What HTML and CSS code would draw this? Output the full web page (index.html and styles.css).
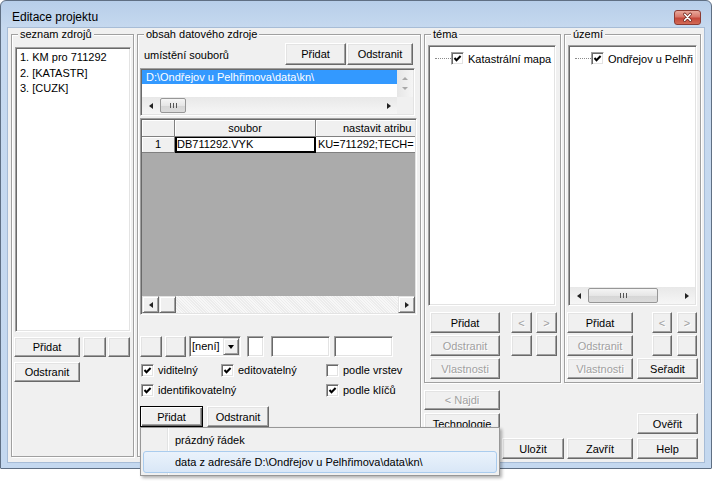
FILE: index.html
```html
<!DOCTYPE html>
<html lang="cs">
<head>
<meta charset="utf-8">
<title>Editace projektu</title>
<link rel="stylesheet" href="styles.css">
</head>
<body>
<div class="window">
  <div class="titlebar">
    <span class="title">Editace projektu</span>
    <span class="close"><svg width="27" height="15" viewBox="0 0 27 15"><path d="M10.5 4 L16.5 10.5 M16.5 4 L10.5 10.5" stroke="#6e2a22" stroke-width="3.4" stroke-linecap="round"/><path d="M10.5 4 L16.5 10.5 M16.5 4 L10.5 10.5" stroke="#fff" stroke-width="1.8" stroke-linecap="round"/></svg></span>
  </div>
  <div class="client">
    <fieldset class="group g-src">
      <legend>seznam zdrojů</legend>
      <div class="listbox src-list">
        <div class="li">1. KM pro 711292</div>
        <div class="li">2. [KATASTR]</div>
        <div class="li">3. [CUZK]</div>
      </div>
      <div class="row src-row1">
        <button class="btn w66">Přidat</button>
        <button class="btn w23 ml3"></button>
        <button class="btn w22 ml2"></button>
      </div>
      <div class="row src-row2">
        <button class="btn w66">Odstranit</button>
      </div>
    </fieldset>

    <fieldset class="group g-content">
      <legend>obsah datového zdroje</legend>
      <div class="row cont-top">
        <span class="lbl">umístění souborů</span>
        <button class="btn h22 w61 push">Přidat</button>
        <button class="btn h22 w66 ml1">Odstranit</button>
      </div>
      <div class="listbox path-list">
        <div class="pl-item"><div class="sel">D:\Ondřejov u Pelhřimova\data\kn\</div></div>
        <div class="vscroll"><span class="tri tri-up"></span><span class="tri tri-dn"></span></div>
        <div class="hscroll">
          <span class="sarrow"><span class="tri tri-l"></span></span>
          <span class="thumb w26"><span class="grip"></span></span>
          <span class="strack"></span>
          <span class="sarrow"><span class="tri tri-r"></span></span>
        </div>
        <div class="corner"></div>
      </div>
      <div class="listbox grid">
        <div class="grid-body">
          <div class="grow ghead">
            <div class="gc fixed c0"></div>
            <div class="gc fixed c1 center">soubor</div>
            <div class="gc fixed c2 hdr2">nastavit atribu</div>
          </div>
          <div class="grow">
            <div class="gc fixed c0 center">1</div>
            <div class="gc cell c1 focus">DB711292.VYK</div>
            <div class="gc cell c2 tight">KU=711292;TECH=</div>
          </div>
        </div>
        <div class="gscroll">
          <span class="cbtn"><span class="tri tri-l"></span></span>
          <span class="cbtn cthumb"></span>
          <span class="ctrack"></span>
          <span class="cbtn"><span class="tri tri-r"></span></span>
        </div>
      </div>
      <div class="row ctrl-row">
        <button class="btn w22"></button>
        <button class="btn w21 ml3"></button>
        <div class="combo ml3"><span class="combo-text">[není]</span><span class="combo-btn"><span class="tri tri-dn dark"></span></span></div>
        <div class="edit w17 ml6"></div>
        <div class="edit w59 ml7"></div>
        <div class="edit w59 ml4"></div>
      </div>
      <div class="checks">
        <label class="chk"><span class="box"><svg width="9" height="9" viewBox="0 0 9 9"><path d="M1.5 4 L3.5 6.2 L7.6 2" stroke="#000" stroke-width="2" fill="none"/></svg></span>viditelný</label>
        <label class="chk"><span class="box"><svg width="9" height="9" viewBox="0 0 9 9"><path d="M1.5 4 L3.5 6.2 L7.6 2" stroke="#000" stroke-width="2" fill="none"/></svg></span>editovatelný</label>
        <label class="chk"><span class="box"></span>podle vrstev</label>
        <label class="chk span2"><span class="box"><svg width="9" height="9" viewBox="0 0 9 9"><path d="M1.5 4 L3.5 6.2 L7.6 2" stroke="#000" stroke-width="2" fill="none"/></svg></span>identifikovatelný</label>
        <label class="chk"><span class="box"><svg width="9" height="9" viewBox="0 0 9 9"><path d="M1.5 4 L3.5 6.2 L7.6 2" stroke="#000" stroke-width="2" fill="none"/></svg></span>podle klíčů</label>
      </div>
      <div class="row cont-btns">
        <button class="btn default w63">Přidat</button>
        <button class="btn w62 ml4">Odstranit</button>
      </div>
    </fieldset>

    <div class="rightcol">
      <div class="trees">
        <fieldset class="group g-tree">
          <legend>téma</legend>
          <div class="listbox tree t1">
            <div class="titem"><span class="dots"></span><span class="box"><svg width="9" height="9" viewBox="0 0 9 9"><path d="M1.5 4 L3.5 6.2 L7.6 2" stroke="#000" stroke-width="2" fill="none"/></svg></span><span class="tlabel">Katastrální mapa</span></div>
          </div>
          <div class="trows t1rows">
            <div class="row"><button class="btn w70">Přidat</button><button class="btn w21 ml11 dis">&lt;</button><button class="btn w21 ml4 dis">&gt;</button></div>
            <div class="row"><button class="btn w70 dis">Odstranit</button><button class="btn w21 ml11"></button><button class="btn w21 ml4"></button></div>
            <div class="row"><button class="btn w70 dis">Vlastnosti</button></div>
          </div>
        </fieldset>
        <fieldset class="group g-tree">
          <legend>území</legend>
          <div class="listbox tree t2">
            <div class="titem"><span class="dots"></span><span class="box"><svg width="9" height="9" viewBox="0 0 9 9"><path d="M1.5 4 L3.5 6.2 L7.6 2" stroke="#000" stroke-width="2" fill="none"/></svg></span><span class="tlabel">Ondřejov u Pelhři</span></div>
            <div class="hscroll tscroll">
              <span class="sarrow"><span class="tri tri-l"></span></span>
              <span class="thumb w70"><span class="grip"></span></span>
              <span class="strack"></span>
              <span class="sarrow"><span class="tri tri-r"></span></span>
            </div>
          </div>
          <div class="trows t2rows">
            <div class="row"><button class="btn w66">Přidat</button><button class="btn w20 ml19 dis">&lt;</button><button class="btn w20 ml5 dis">&gt;</button></div>
            <div class="row"><button class="btn w66 dis">Odstranit</button><button class="btn w20 ml19"></button><button class="btn w20 ml5"></button></div>
            <div class="row"><button class="btn w66 dis">Vlastnosti</button><button class="btn w61 ml4">Seřadit</button></div>
          </div>
        </fieldset>
      </div>
      <div class="row najdi-row"><button class="btn w76 h20 dis">&lt; Najdi</button></div>
      <div class="row tech-row"><button class="btn w76">Technologie</button><button class="btn w61 push mr3">Ověřit</button></div>
      <div class="row end-row"><button class="btn w62">Uložit</button><button class="btn w66 ml3">Zavřít</button><button class="btn w61 ml4">Help</button></div>
    </div>

    <div class="menu">
      <div class="mi">prázdný řádek</div>
      <div class="mi hl">data z adresáře D:\Ondřejov u Pelhřimova\data\kn\</div>
    </div>
  </div>
</div>
</body>
</html>
```

FILE: styles.css
```css
* { box-sizing: border-box; }
html, body { margin: 0; padding: 0; }
body {
  background: #fff;
  font-family: "Liberation Sans", Arial, sans-serif;
  font-size: 11px;
  color: #000;
  width: 712px;
  height: 486px;
  overflow: hidden;
}
.window {
  position: relative;
  width: 712px;
  height: 469px;
  border: 1px solid #5f6f83;
  border-radius: 6px 6px 1px 1px;
  background: linear-gradient(to bottom, #b7cee9 0, #c6d9ef 27px, #c4d8ef 100%);
  padding: 0 7px;
}
.titlebar {
  height: 27px;
  display: flex;
  align-items: flex-start;
  justify-content: space-between;
}
.title { font-size: 12px; line-height: 14px; margin: 9px 0 0 4px; }
.close {
  width: 27px; height: 15px;
  margin: 9px 3px 0 0;
  border: 1px solid #8c3b33;
  border-radius: 3px;
  background: linear-gradient(to bottom, #e9a99c 0, #d8776a 45%, #c4473a 55%, #d26a55 100%);
  display: flex;
  align-items: center;
  justify-content: center;
  overflow: hidden;
}
.close svg { display: block; margin-top: -1px; }
.client {
  position: relative;
  height: 434px;
  background: #f0f0f0;
  display: flex;
  align-items: flex-start;
  padding-left: 3px;
  box-shadow: 0 0 0 1px #a7bcd6;
}

/* group boxes */
.group {
  margin: 0;
  padding: 0;
  min-width: 0;
  border: 1px solid #a0a0a0;
  box-shadow: inset 1px 1px 0 #fff, 1px 1px 0 #fff;
}
.group legend {
  padding: 0 2px;
  margin-left: 6px;
  line-height: 12px;
  background: #f0f0f0;
}
.g-src { width: 123px; height: 429px; margin-right: 3px; padding-top: 7px; }
.g-content { width: 284px; height: 429px; margin-right: 3px; }
.g-tree { width: 137px; height: 355px; padding-top: 5px; }

.row { display: flex; align-items: center; }

/* buttons */
.btn {
  height: 21px;
  margin: 0;
  padding: 0;
  font: inherit;
  font-weight: normal;
  color: #000;
  background: #f0f0f0;
  border: 1px solid;
  border-color: #fff #696969 #696969 #fff;
  box-shadow: inset -1px -1px 0 #a0a0a0, inset 1px 1px 0 #e3e3e3;
  display: flex;
  align-items: center;
  justify-content: center;
  flex: none;
  white-space: nowrap;
}
.btn.default {
  border: 1px solid #000;
  box-shadow: inset 1px 1px 0 #fff, inset -1px -1px 0 #696969, inset -2px -2px 0 #a0a0a0;
}
.btn.dis { color: #a0a0a0; text-shadow: 1px 1px 0 #fff; }
.h20 { height: 20px; }
.h22 { height: 22px; }
.w17 { width: 17px; } .w20 { width: 20px; } .w21 { width: 21px; } .w22 { width: 22px; }
.w23 { width: 23px; } .w26 { width: 26px; } .w59 { width: 59px; } .w61 { width: 61px; }
.w62 { width: 62px; } .w63 { width: 63px; } .w66 { width: 66px; } .w70 { width: 70px; }
.w76 { width: 76px; }
.ml1 { margin-left: 1px; } .ml2 { margin-left: 2px; } .ml3 { margin-left: 3px; }
.ml4 { margin-left: 4px; } .ml5 { margin-left: 5px; } .ml6 { margin-left: 6px; }
.ml7 { margin-left: 7px; } .ml11 { margin-left: 11px; } .ml19 { margin-left: 19px; }
.mr3 { margin-right: 3px; }
.push { margin-left: auto; }

/* sunken boxes */
.listbox, .edit, .combo {
  background: #fff;
  border: 1px solid;
  border-color: #a0a0a0 #fff #fff #a0a0a0;
  box-shadow: inset 1px 1px 0 #696969, inset -1px -1px 0 #e3e3e3;
  padding: 1px;
}

/* left list */
.src-list { width: 116px; height: 285px; margin-left: 3px; padding: 2px 4px; }
.li { height: 15.5px; line-height: 15px; white-space: nowrap; }
.src-row1 { margin: 5px 0 0 2px; }
.src-row1 .btn, .src-row2 .btn { height: 20px; }
.src-row2 { margin: 5px 0 0 2px; }

/* content group */
.cont-top { width: 275px; height: 22px; margin: 3px 0 0 2px; }
.lbl { margin: 2px 0 0 4px; }
.cont-top .btn:last-child { margin-right: 2px; }
.path-list {
  width: 275px; height: 48px; margin: 3px 0 0 2px;
  display: grid;
  grid-template-columns: 255px 16px;
  grid-template-rows: 27px 17px;
}
.pl-item { overflow: hidden; }
.sel {
  height: 14px; line-height: 14px;
  background: #3399ff; color: #fff;
  padding-left: 4px; white-space: nowrap;
}
.vscroll {
  background: linear-gradient(to right, #e6e6e6, #f5f5f5);
  display: flex; flex-direction: column; align-items: center; justify-content: center; gap: 7px;
}
.hscroll {
  display: flex; align-items: center;
  background: linear-gradient(to bottom, #e8e8e8, #f6f6f6);
}
.corner { background: #f0f0f0; }
.sarrow { width: 17px; height: 17px; display: flex; align-items: center; justify-content: center; flex: none; }
.strack { flex: 1; }
.thumb {
  height: 15px; flex: none;
  border: 1px solid #979797; border-radius: 2px;
  background: linear-gradient(to bottom, #f5f5f5 0, #e6e6e6 50%, #d6d6d6 51%, #dcdcdc 100%);
  display: flex; align-items: center; justify-content: center;
  margin-left: 1px;
}
.thumb.w70 { width: 70px; }
.grip {
  width: 7px; height: 5px;
  background: linear-gradient(to right, #555 0 1px, transparent 1px 3px, #555 3px 4px, transparent 4px 6px, #555 6px 7px);
}
.tri { width: 0; height: 0; border-style: solid; display: block; }
.tri-l { border-width: 3.5px 4px 3.5px 0; border-color: transparent #222 transparent transparent; }
.tri-r { border-width: 3.5px 0 3.5px 4px; border-color: transparent transparent transparent #222; }
.tri-up { border-width: 0 3px 3px 3px; border-color: transparent transparent #a8a8a8 transparent; }
.tri-dn { border-width: 3px 3px 0 3px; border-color: #a8a8a8 transparent transparent transparent; }
.tri-dn.dark { border-width: 4px 3.5px 0 3.5px; border-color: #000 transparent transparent transparent; }

/* grid */
.grid { width: 277px; height: 197px; margin: 2px 0 0 2px; display: flex; flex-direction: column; background: #ababab; }
.grid-body { flex: 1; overflow: hidden; }
.grow { display: flex; height: 16px; }
.grow.ghead { height: 17px; }
.gc {
  flex: none; height: 100%;
  border-right: 1px solid #808080;
  border-bottom: 1px solid #808080;
  white-space: nowrap; overflow: hidden;
  line-height: 14px;
}
.gc.fixed { background: #f0f0f0; box-shadow: inset 1px 1px 0 #fff; }
.gc.cell { background: #fff; padding-left: 2px; }
.gc.center { text-align: center; }
.ghead .gc { line-height: 16px; }
.c0 { width: 33px; }
.c1 { width: 141px; }
.c2 { width: 99px; border-right: 0; }
.hdr2 { padding-left: 27px; }
.tight { letter-spacing: -0.1px; }
.gc.focus { border: 2px solid #000; border-top-width: 1px; padding-left: 0; line-height: 13px; }
.gscroll { height: 17px; display: flex; background: #f3f3f3; flex: none; }
.cbtn {
  width: 17px; height: 17px; flex: none;
  background: #f0f0f0;
  border: 1px solid; border-color: #e3e3e3 #696969 #696969 #e3e3e3;
  box-shadow: inset 1px 1px 0 #fff, inset -1px -1px 0 #a0a0a0;
  display: flex; align-items: center; justify-content: center;
}
.cthumb { width: 17px; }
.ctrack { flex: 1; background: repeating-linear-gradient(45deg, #f7f7f7 0 1px, #ececec 1px 2px); }

/* controls row */
.ctrl-row { height: 21px; margin: 21px 0 0 2px; }
.edit { height: 21px; flex: none; }
.combo { width: 52px; height: 21px; display: flex; align-items: stretch; flex: none; }
.combo-text { flex: 1; line-height: 17px; padding-left: 1px; }
.combo-btn {
  width: 16px; flex: none; background: #f0f0f0;
  border: 1px solid; border-color: #e3e3e3 #696969 #696969 #e3e3e3;
  box-shadow: inset 1px 1px 0 #fff, inset -1px -1px 0 #a0a0a0;
  display: flex; align-items: center; justify-content: center;
}

/* checkboxes */
.checks {
  display: grid;
  grid-template-columns: 80px 105px auto;
  grid-auto-rows: 16px;
  row-gap: 4px;
  margin: 5px 0 0 3px;
}
.chk { display: flex; align-items: center; white-space: nowrap; }
.chk.span2 { grid-column: span 2; }
.box {
  width: 13px; height: 13px; flex: none;
  background: #fff;
  border: 1px solid; border-color: #a0a0a0 #fff #fff #a0a0a0;
  box-shadow: inset 1px 1px 0 #696969, inset -1px -1px 0 #e3e3e3;
  display: flex; align-items: center; justify-content: center;
  margin-right: 4px;
}
.box svg { display: block; }
.cont-btns { margin: 8px 0 0 2px; }

/* right column */
.rightcol { width: 277px; display: flex; flex-direction: column; }
.trees { display: flex; gap: 3px; }
.tree { height: 261px; margin-left: 3px; padding: 5px 1px 1px 1px; display: flex; flex-direction: column; overflow: hidden; }
.t1 { width: 128px; }
.t2 { width: 129px; }
.titem { display: flex; align-items: center; height: 15px; white-space: nowrap; flex: none; }
.dots { width: 16px; margin-left: 5px; border-top: 1px dotted #8a8a8a; flex: none; }
.titem .box { margin-right: 4px; }
.tscroll { margin-top: auto; height: 17px; flex: none; }
.trows { display: flex; flex-direction: column; gap: 2px; margin-top: 6px; }
.t1rows { margin-left: 5px; }
.t2rows { margin-left: 2px; }
.najdi-row { margin-top: 7px; }
.tech-row { margin-top: 3px; }
.end-row { margin-top: 4px; justify-content: flex-end; padding-right: 3px; }

/* popup menu */
.menu {
  position: absolute;
  left: 132px;
  top: 399px;
  width: 360px;
  height: 49px;
  background: #f0f0f0;
  border: 1px solid #979797;
  box-shadow: 2px 2px 3px rgba(0, 0, 0, 0.3);
  padding: 1px 2px;
  background-image: linear-gradient(to right, transparent 26px, #e2e3e3 26px 27px, #fff 27px 28px, transparent 28px);
}
.mi {
  height: 22px;
  line-height: 20px;
  padding-left: 31px;
  border: 1px solid transparent;
  border-radius: 3px;
  white-space: nowrap;
}
.mi.hl {
  border-color: #aaccee;
  background: linear-gradient(to bottom, #eaf2fb, #d9e7f7);
}
```
